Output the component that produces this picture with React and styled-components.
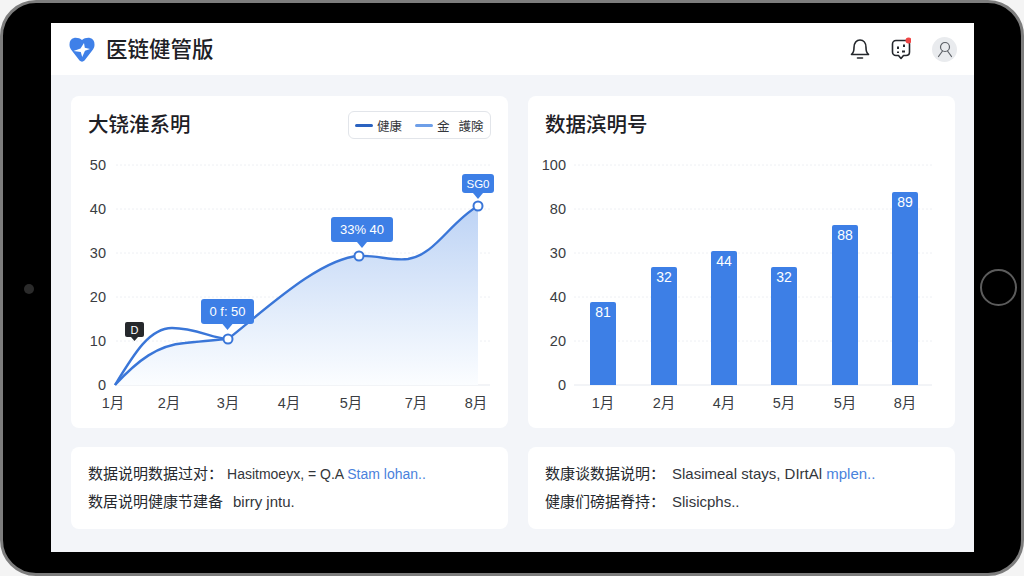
import React from 'react';
import styled, { createGlobalStyle } from 'styled-components';

const BLUE = '#3d7fe6';
const LINE = '#3a76d8';
const MONTHS_LINE = [[113, '1月'], [169, '2月'], [228, '3月'], [289, '4月'], [351, '5月'], [416, '7月'], [476, '8月']];
const MONTHS_BAR = ['1月', '2月', '4月', '5月', '5月', '8月'];
const Y_ROWS = [165, 209, 253, 297, 341, 385];
const BARS = [
  { x: 590, top: 302, label: '81' },
  { x: 651, top: 267, label: '32' },
  { x: 711, top: 251, label: '44' },
  { x: 771, top: 267, label: '32' },
  { x: 832, top: 225, label: '88' },
  { x: 892, top: 192, label: '89' },
];

const LOWER_CURVE = 'M115 385 C138 360 158 345 185 343 C200 341.5 215 340 228 339';
const MAIN_CURVE = 'C265 310 320 258 359 256 C378 255 390 261 408 259 C435 255 450 222 478 206';

const Tip = ({ x, y, w, h, size = 13, text }) => (
  <g>
    <rect x={x} y={y} width={w} height={h} rx="3" fill={BLUE} />
    <path d={`M${x + w / 2 - 5} ${y + h} h10 l-5 6 z`} fill={BLUE} />
    <text x={x + w / 2} y={y + h / 2 + 4.5} fill="#fff" fontSize={size} textAnchor="middle">{text}</text>
  </g>
);

const LineChart = () => (
  <Chart viewBox="88 151 403 265">
    <defs>
      <linearGradient id="area" x1="0" y1="0" x2="0" y2="1">
        <stop offset="0" stopColor="#bdd3f5" />
        <stop offset="0.6" stopColor="#e3edfb" />
        <stop offset="1" stopColor="#fbfdff" />
      </linearGradient>
    </defs>
    {Y_ROWS.slice(0, 5).map(y => (
      <line key={y} x1="116" x2="490" y1={y} y2={y} stroke="#eef0f4" strokeDasharray="2 2" />
    ))}
    <line x1="116" x2="490" y1="385" y2="385" stroke="#e6e9ef" />
    {['50', '40', '30', '20', '10', '0'].map((v, i) => (
      <AxisText key={v} x="106" y={Y_ROWS[i] + 5} textAnchor="end">{v}</AxisText>
    ))}
    {MONTHS_LINE.map(([x, m]) => (
      <AxisText key={m} x={x} y="408" textAnchor="middle">{m}</AxisText>
    ))}
    <path d={`${LOWER_CURVE} ${MAIN_CURVE} V385 Z`} fill="url(#area)" />
    <path d={`${LOWER_CURVE} ${MAIN_CURVE}`} fill="none" stroke={LINE} strokeWidth="2.4" />
    <path d="M115 385 C135 352 150 328 172 328 C195 328 212 338 228 339" fill="none" stroke={LINE} strokeWidth="2.4" />
    <circle cx="228" cy="339" r="4.5" fill="#fff" stroke={LINE} strokeWidth="2" />
    <circle cx="359" cy="256" r="4.5" fill="#fff" stroke={LINE} strokeWidth="2" />
    <circle cx="478" cy="206" r="4.5" fill="#fff" stroke={LINE} strokeWidth="2" />
    <Tip x={201} y={299} w={53} h={25} text="0 f: 50" />
    <Tip x={331} y={217} w={62} h={25} text="33% 40" />
    <Tip x={462} y={174} w={32} h={19} size={11.5} text="SG0" />
    <rect x="125" y="322" width="19" height="15" rx="2" fill="#26282c" />
    <path d="M131 337 h7 l-3.5 4 z" fill="#26282c" />
    <text x="134.5" y="334" fill="#fff" fontSize="11" textAnchor="middle">D</text>
  </Chart>
);

const BarChart = () => (
  <Chart viewBox="545 151 393 265">
    {Y_ROWS.slice(0, 5).map(y => (
      <line key={y} x1="574" x2="932" y1={y} y2={y} stroke="#eef0f4" strokeDasharray="2 2" />
    ))}
    <line x1="574" x2="932" y1="385" y2="385" stroke="#e6e9ef" />
    {['100', '80', '30', '40', '20', '0'].map((v, i) => (
      <AxisText key={i} x="566" y={Y_ROWS[i] + 5} textAnchor="end">{v}</AxisText>
    ))}
    {BARS.map((b, i) => (
      <g key={i}>
        <path d={`M${b.x} 385 V${b.top + 2} q0 -2 2 -2 h22 q2 0 2 2 V385 z`} fill={BLUE} />
        <text x={b.x + 13} y={b.top + 15} fill="#fff" fontSize="14" textAnchor="middle">{b.label}</text>
        <AxisText x={b.x + 13} y="408" textAnchor="middle">{MONTHS_BAR[i]}</AxisText>
      </g>
    ))}
  </Chart>
);

const App = () => (
  <>
    <GlobalStyle />
    <Device>
      <Camera />
      <HomeButton />
      <Screen>
        <Header>
          <Brand>
            <svg width="26" height="25" viewBox="0 0 26 25">
              <path d="M5 1 C8 .5 11 1.5 13 3 C15 1.5 18 .5 21 1 C24 1.5 25.5 4 25.5 7.5 C25.5 9.5 25 11 24 12.5 L15.5 23.5 C14 25 12 25 10.5 23.5 L2 12.5 C1 11 .5 9.5 .5 7.5 C.5 4 2 1.5 5 1 Z" fill="#3f80e8" />
              <path d="M15 6 L15.8 10.8 L21 12 L16 13.8 L13.2 20 L11.8 15 L4.5 14 L11.5 11.5 Z" fill="#fff" />
            </svg>
            <BrandName>医链健管版</BrandName>
          </Brand>
          <Actions>
            <svg width="20" height="22" viewBox="0 0 20 22" fill="none" stroke="#24272c" strokeWidth="1.6" strokeLinecap="round" strokeLinejoin="round">
              <path d="M1.5 16.5 C3.5 15 4 13 4 9.5 C4 5 6.5 2 10 2 C13.5 2 16 5 16 9.5 C16 13 16.5 15 18.5 16.5 Z" />
              <path d="M7.5 20 H12.5" />
            </svg>
            <svg width="20" height="24" viewBox="0 0 20 24" fill="none">
              <path d="M5 3.5 H15 C17 3.5 18.5 5 18.5 7 V15 C18.5 17 17 18.5 15 18.5 H12.5 L10 21.5 L7.5 18.5 H5 C3 18.5 1.5 17 1.5 15 V7 C1.5 5 3 3.5 5 3.5 Z" stroke="#24272c" strokeWidth="1.6" strokeLinejoin="round" />
              <path d="M6 9.5 h2 v2.5 h-2 z M12 7.5 h2 v2.5 h-2 z M11 13.5 h3 v2 h-3 z M6 14.5 h2 v1.5 h-2 z" fill="#24272c" />
              <circle cx="17.5" cy="3.5" r="3" fill="#ef4444" />
            </svg>
            <Avatar>
              <svg width="16" height="17" viewBox="0 0 16 17" fill="none" stroke="#5d6167" strokeWidth="1.2" strokeLinecap="round">
                <circle cx="8" cy="6" r="4.5" />
                <path d="M5.5 10 L1.5 15.5 M10.5 10 L14.5 15.5" />
              </svg>
            </Avatar>
          </Actions>
        </Header>
        <Content>
          <Card>
            <CardHead>
              <CardTitle>大铙淮系明</CardTitle>
              <Legend>
                <LegendItem>
                  <Swatch color="#2a62c0" />健康
                </LegendItem>
                <LegendItem>
                  <Swatch color="#6e9fe8" />金<LegendGap>護険</LegendGap>
                </LegendItem>
              </Legend>
            </CardHead>
            <LineChart />
          </Card>
          <Card>
            <CardHead>
              <CardTitle>数据滨明号</CardTitle>
            </CardHead>
            <BarChart />
          </Card>
          <Note>
            <NoteLine>
              <NoteLabel gap={4}>数据说明数据过对：</NoteLabel>Hasitmoeyx, = Q.A <Accent>Stam lohan..</Accent>
            </NoteLine>
            <NoteLine size={15}>
              <NoteLabel gap={10}>数居说明健康节建备</NoteLabel>birry jntu.
            </NoteLine>
          </Note>
          <Note>
            <NoteLine size={15}>
              <NoteLabel gap={7}>数康谈数据说明：</NoteLabel>Slasimeal stays, DIrtAl <Accent>mplen..</Accent>
            </NoteLine>
            <NoteLine size={15}>
              <NoteLabel gap={7}>健康们磅据脊持：</NoteLabel>Slisicphs..
            </NoteLine>
          </Note>
        </Content>
      </Screen>
    </Device>
  </>
);

const GlobalStyle = createGlobalStyle`
  html, body {
    margin: 0;
    width: 1024px;
    height: 576px;
    overflow: hidden;
    background: #f4f4f4;
    font-family: "Liberation Sans", "Noto Sans CJK SC", sans-serif;
  }
`;

const Device = styled.div`
  box-sizing: border-box;
  position: relative;
  width: 1024px;
  height: 576px;
  padding: 20px 47px 21px 48px;
  background: #000;
  border: 3px solid #7d7d7d;
  border-radius: 36px;
`;

const Camera = styled.div`
  position: absolute;
  left: 21px;
  top: 281px;
  width: 10px;
  height: 10px;
  border-radius: 50%;
  background: #2b2b2b;
`;

const HomeButton = styled.div`
  position: absolute;
  left: 977px;
  top: 266px;
  box-sizing: border-box;
  width: 37px;
  height: 37px;
  border-radius: 50%;
  border: 2px solid #5c5c5c;
`;

const Screen = styled.div`
  height: 100%;
  display: flex;
  flex-direction: column;
  background: #f3f5f9;
`;

const Header = styled.header`
  height: 52px;
  flex: none;
  display: flex;
  align-items: center;
  justify-content: space-between;
  padding: 0 17px 0 18px;
  background: #fff;
`;

const Brand = styled.div`
  display: flex;
  align-items: center;
  gap: 11px;
`;

const BrandName = styled.h1`
  margin: 0 0 4px;
  font-size: 21.5px;
  font-weight: 500;
  color: #1d2025;
`;

const Actions = styled.div`
  display: flex;
  align-items: center;
  gap: 21px;
`;

const Avatar = styled.div`
  width: 25px;
  height: 25px;
  border-radius: 50%;
  background: #e9ebee;
  display: flex;
  align-items: center;
  justify-content: center;
`;

const Content = styled.main`
  flex: 1;
  display: grid;
  grid-template-columns: 437px 427px;
  grid-template-rows: 332px 82px;
  column-gap: 20px;
  row-gap: 19px;
  padding: 21px 19px 23px 20px;
`;

const Card = styled.section`
  box-sizing: border-box;
  padding: 15px 17px 12px;
  background: #fff;
  border-radius: 8px;
`;

const CardHead = styled.div`
  height: 28px;
  margin-bottom: 12px;
  display: flex;
  align-items: center;
  justify-content: space-between;
`;

const CardTitle = styled.h2`
  margin: 0 0 4px;
  font-size: 20.5px;
  font-weight: 500;
  color: #1d2025;
`;

const Legend = styled.div`
  box-sizing: border-box;
  width: 143px;
  height: 28px;
  padding: 0 6px;
  display: flex;
  align-items: center;
  gap: 13px;
  border: 1px solid #e2e5ea;
  border-radius: 6px;
  font-size: 12.5px;
  color: #33363b;
`;

const LegendItem = styled.span`
  display: flex;
  align-items: center;
`;

const LegendGap = styled.span`
  margin-left: 9px;
`;

const Swatch = styled.i`
  width: 18px;
  height: 3px;
  margin-right: 4px;
  border-radius: 2px;
  background: ${props => props.color};
`;

const Chart = styled.svg`
  display: block;
  width: 100%;
  height: 265px;
  overflow: visible;
`;

const AxisText = styled.text`
  font-size: 14.5px;
  fill: #3a3d42;
`;

const Note = styled.section`
  box-sizing: border-box;
  padding: 13px 17px;
  background: #fff;
  border-radius: 8px;
`;

const NoteLine = styled.div`
  height: 28px;
  line-height: 28px;
  font-size: ${props => props.size || 14}px;
  color: #33363b;
  white-space: nowrap;
`;

const NoteLabel = styled.span`
  margin-right: ${props => props.gap}px;
  font-size: 15px;
  color: #26292e;
`;

const Accent = styled.span`
  color: #4a82dc;
`;

export default App;
